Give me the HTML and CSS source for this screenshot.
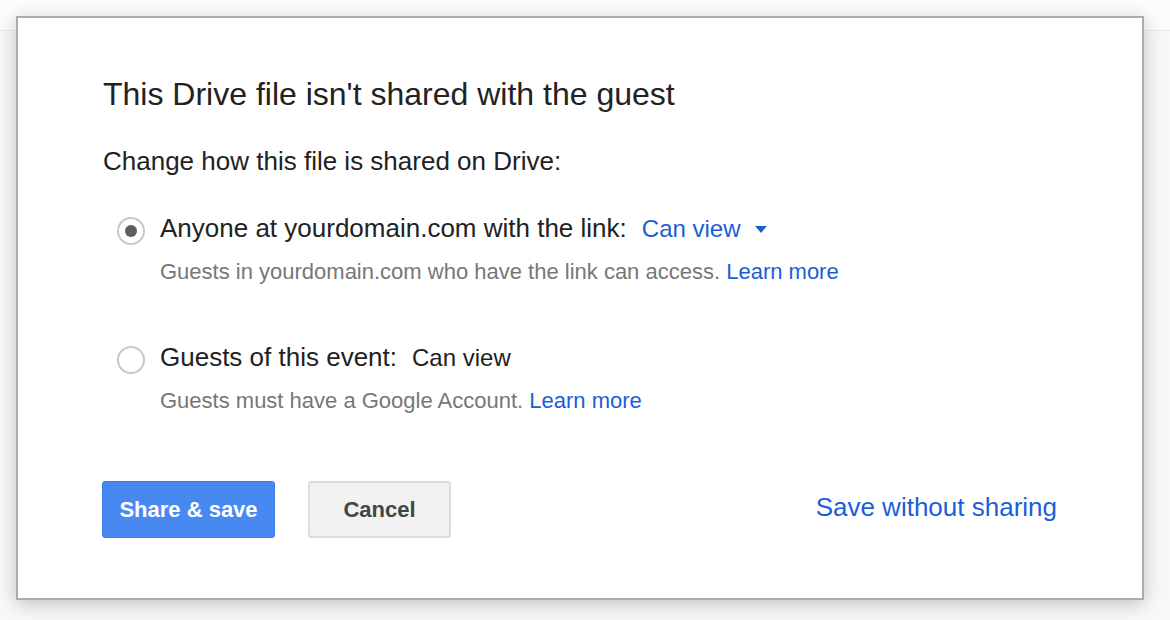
FILE: index.html
```html
<!DOCTYPE html>
<html lang="en">
<head>
<meta charset="utf-8">
<title>Share Drive file</title>
<link rel="stylesheet" href="styles.css">
</head>
<body>
<div class="backdrop-bar"></div>
<div class="dialog" role="dialog">
  <h1 class="title">This Drive file isn't shared with the guest</h1>
  <p class="lead">Change how this file is shared on Drive:</p>

  <div class="option">
    <span class="radio checked"><span class="dot"></span></span>
    <div class="option-body">
      <div class="option-label">
        <span>Anyone at yourdomain.com with the link:</span>
        <span class="perm link">Can view</span>
        <svg class="caret" width="12" height="7" viewBox="0 0 12 7"><path d="M0 0h12L6 7z" fill="#1a5fd6"/></svg>
      </div>
      <div class="option-sub">Guests in yourdomain.com who have the link can access. <a class="link" href="#">Learn more</a></div>
    </div>
  </div>

  <div class="option second">
    <span class="radio"></span>
    <div class="option-body">
      <div class="option-label">
        <span>Guests of this event:</span>
        <span class="perm">Can view</span>
      </div>
      <div class="option-sub">Guests must have a Google Account. <a class="link" href="#">Learn more</a></div>
    </div>
  </div>

  <div class="actions">
    <button class="btn primary">Share &amp; save</button>
    <button class="btn secondary">Cancel</button>
    <a class="link save-link" href="#">Save without sharing</a>
  </div>
</div>
</body>
</html>
```

FILE: styles.css
```css
html, body {
  margin: 0;
  padding: 0;
}
body {
  background: #f8f8f8;
  font-family: "Liberation Sans", Arial, sans-serif;
  color: #222;
  padding: 16px;
  width: 1170px;
  height: 620px;
  box-sizing: border-box;
  position: relative;
  overflow: hidden;
}
.backdrop-bar {
  position: absolute;
  left: 0;
  top: 0;
  width: 100%;
  height: 30px;
  background: #fcfcfc;
  border-bottom: 1px solid #ececec;
}
.dialog {
  position: relative;
  width: 1128px;
  height: 584px;
  box-sizing: border-box;
  background: #fff;
  border: 2px solid #acacac;
  box-shadow: 0 4px 18px rgba(0, 0, 0, 0.22);
  padding: 57px 85px 0 85px;
}
.title {
  margin: 0;
  font-size: 32px;
  line-height: 38px;
  font-weight: normal;
  color: #222;
}
.lead {
  margin: 33px 0 0 0;
  font-size: 26px;
  line-height: 30px;
  color: #222;
}
.option {
  display: flex;
  align-items: flex-start;
  margin-top: 37px;
  padding-left: 14px;
}
.option.second {
  margin-top: 57px;
}
.radio {
  width: 28px;
  height: 28px;
  box-sizing: border-box;
  border: 2px solid #c8c8c8;
  border-radius: 50%;
  margin-top: 4px;
  margin-right: 15px;
  flex: none;
  display: flex;
  align-items: center;
  justify-content: center;
}
.radio .dot {
  width: 12px;
  height: 12px;
  border-radius: 50%;
  background: #5e5e5e;
}
.option-label {
  display: flex;
  align-items: baseline;
  height: 30px;
  font-size: 26px;
  line-height: 30px;
  color: #222;
}
.perm {
  margin-left: 15px;
  font-size: 24px;
  line-height: 26px;
  color: #222;
}
.perm.link {
  color: #1a5fd6;
}
.caret {
  align-self: center;
  margin-left: 14px;
  margin-top: 2px;
}
.option-sub {
  margin-top: 16px;
  font-size: 22px;
  line-height: 26px;
  color: #777;
}
.link {
  color: #1a5fd6;
  text-decoration: none;
}
.actions {
  display: flex;
  align-items: flex-start;
  margin-top: 67px;
  margin-left: -1px;
}
.btn {
  height: 57px;
  box-sizing: border-box;
  border-radius: 3px;
  font-family: "Liberation Sans", Arial, sans-serif;
  font-size: 22px;
  font-weight: bold;
  padding: 0;
  cursor: pointer;
}
.btn.primary {
  width: 173px;
  background: #4889f1;
  border: 1px solid #3b7be4;
  color: #fff;
}
.btn.secondary {
  width: 143px;
  margin-left: 33px;
  background: #f2f2f2;
  border: 2px solid #dcdcdc;
  color: #444;
}
.save-link {
  margin-left: auto;
  margin-top: 11px;
  font-size: 26px;
  line-height: 30px;
}
```
